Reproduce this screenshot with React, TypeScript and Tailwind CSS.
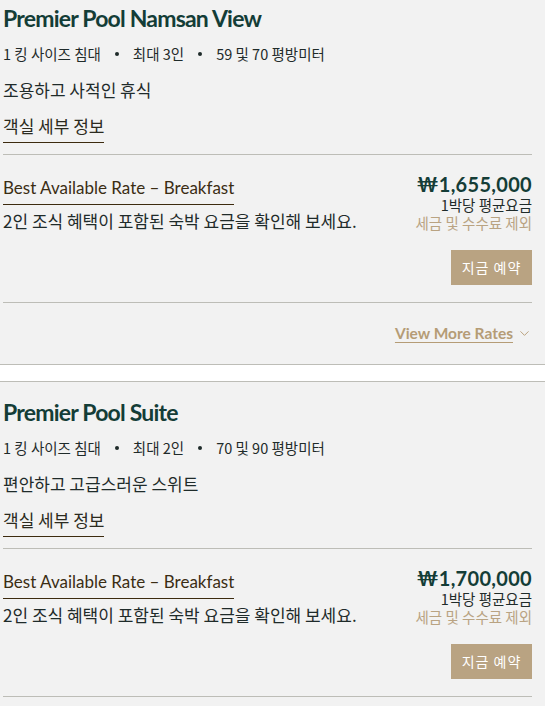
import { ChevronDown } from "lucide-react";

const rooms = [
  {
    name: "Premier Pool Namsan View",
    bed: "1 킹 사이즈 침대",
    guests: "최대 3인",
    size: "59 및 70 평방미터",
    tagline: "조용하고 사적인 휴식",
    price: "₩1,655,000",
  },
  {
    name: "Premier Pool Suite",
    bed: "1 킹 사이즈 침대",
    guests: "최대 2인",
    size: "70 및 90 평방미터",
    tagline: "편안하고 고급스러운 스위트",
    price: "₩1,700,000",
  },
];

const kr = { fontFamily: '"Noto Sans CJK KR", "Noto Sans", sans-serif' };
const latin = { fontFamily: 'Lato, "Noto Sans CJK KR", sans-serif' };

function RoomCard({ room }: { room: (typeof rooms)[number] }) {
  return (
    <section className="bg-[#f2f2f2] border-y border-[#bdbdb7] pt-[14px] pl-[3px] pr-[13px]">
      <h2
        className="text-[23px] leading-[32px] font-bold text-[#143d37] tracking-[-0.8px]"
        style={latin}
      >
        {room.name}
      </h2>

      <div className="mt-[10px] flex items-center gap-[14px] text-[14.5px] leading-[20px] text-[#1f2b2a]" style={kr}>
        <span>{room.bed}</span>
        <span className="w-[4px] h-[4px] rounded-full bg-[#1f2b2a]" />
        <span>{room.guests}</span>
        <span className="w-[4px] h-[4px] rounded-full bg-[#1f2b2a]" />
        <span>{room.size}</span>
      </div>

      <p className="mt-[15px] text-[17px] leading-[22px] text-[#1f2b2a]" style={kr}>
        {room.tagline}
      </p>

      <div className="mt-[14px]">
        <a
          className="inline-block text-[17px] leading-[22px] text-[#2b2a20] border-b border-[#3d2b0f] pb-[5px]"
          style={kr}
        >
          객실 세부 정보
        </a>
      </div>

      <div className="mt-[11px] border-t border-[#bdbdb7] pt-[21px]">
        <div className="flex justify-between">
          <div>
            <div className="inline-block text-[17px] leading-[24px] text-[#3b2d14] border-b border-[#3d2b0f] pb-[4px]" style={latin}>
              Best Available Rate – Breakfast
            </div>
            <p className="mt-[4px] text-[17px] leading-[24px] text-[#1f2b2a]" style={kr}>
              2인 조식 혜택이 포함된 숙박 요금을 확인해 보세요.
            </p>
          </div>
          <div className="flex flex-col items-end -mt-[3px]">
            <div className="text-[20px] leading-[23px] font-bold text-[#143d37] tracking-[0.3px]" style={latin}>
              {room.price}
            </div>
            <div className="text-[14.5px] leading-[18px] text-[#1f2b2a]" style={kr}>
              1박당 평균요금
            </div>
            <div className="text-[14.5px] leading-[18px] text-[#b9a382]" style={kr}>
              세금 및 수수료 제외
            </div>
          </div>
        </div>

        <div className="flex justify-end mt-[17px]">
          <button
            className="w-[81px] h-[35px] bg-[#b9a382] text-white text-[14px] tracking-[1px]"
            style={kr}
          >
            지금 예약
          </button>
        </div>
      </div>

      <div className="mt-[17px] border-t border-[#bdbdb7] flex justify-end items-center gap-[4px] pt-[20px] pb-[21px]">
        <a className="text-[15.5px] leading-[20px] font-bold text-[#b59c76] underline underline-offset-[3px]" style={latin}>
          View More Rates
        </a>
        <ChevronDown className="w-[15px] h-[15px] text-[#b59c76]" strokeWidth={1.5} />
      </div>
    </section>
  );
}

export default function App() {
  return (
    <div className="bg-white h-[706px] overflow-hidden">
      <div className="-mt-[13px] flex flex-col gap-[16px]">
        {rooms.map((room) => (
          <RoomCard key={room.name} room={room} />
        ))}
      </div>
    </div>
  );
}
